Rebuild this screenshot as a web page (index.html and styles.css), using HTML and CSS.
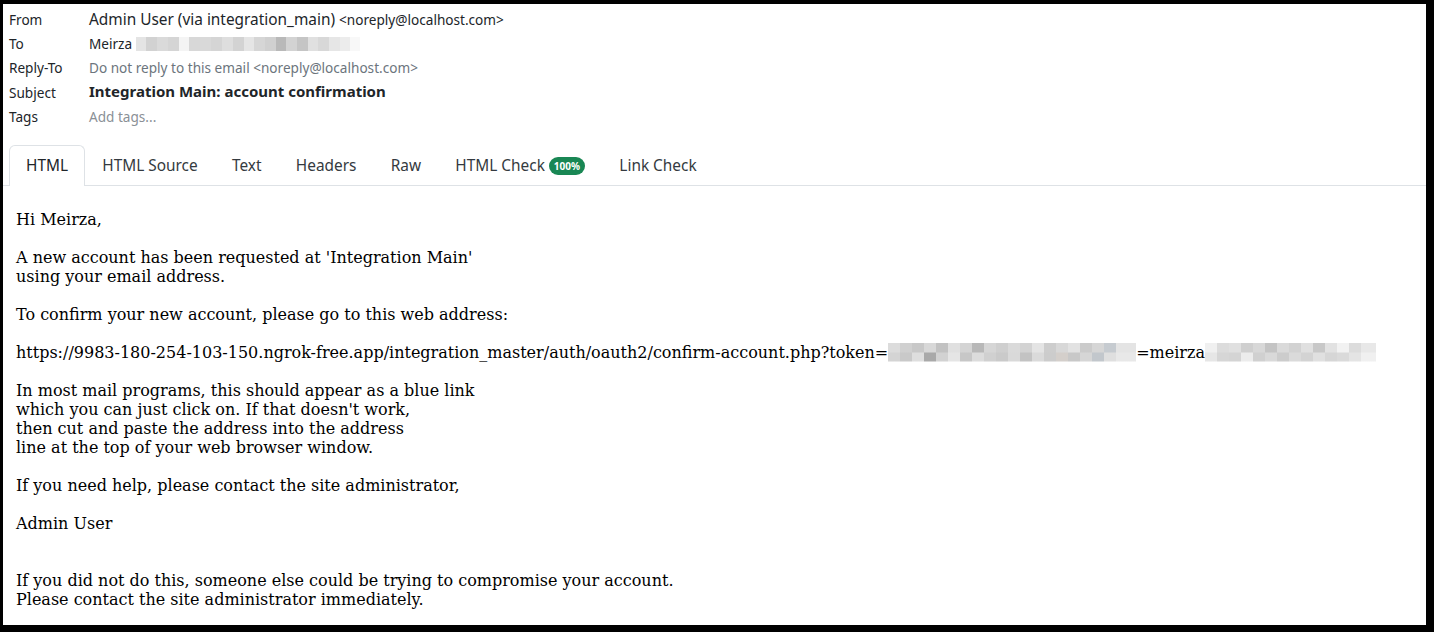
FILE: index.html
```html
<!DOCTYPE html>
<html>
<head>
<meta charset="utf-8">
<link rel="stylesheet" href="styles.css">
</head>
<body>
<div class="frame">
  <div class="headers">
    <div class="row"><div class="label">From</div><div class="value"><span class="name">Admin User (via integration_main)</span> <span class="addr">&lt;noreply@localhost.com&gt;</span></div></div>
    <div class="row"><div class="label">To</div><div class="value"><span class="to-name">Meirza</span><span class="blur blur-to"></span></div></div>
    <div class="row"><div class="label">Reply-To</div><div class="value muted">Do not reply to this email &lt;noreply@localhost.com&gt;</div></div>
    <div class="row"><div class="label">Subject</div><div class="value subject">Integration Main: account confirmation</div></div>
    <div class="row"><div class="label">Tags</div><div class="value tags">Add tags...</div></div>
  </div>
  <div class="tabs">
    <div class="tab active">HTML</div>
    <div class="tab">HTML Source</div>
    <div class="tab">Text</div>
    <div class="tab">Headers</div>
    <div class="tab">Raw</div>
    <div class="tab">HTML Check <span class="badge">100%</span></div>
    <div class="tab">Link Check</div>
  </div>
  <div class="message">
    <p>Hi Meirza,</p>
    <p>A new account has been requested at 'Integration Main'<br>using your email address.</p>
    <p>To confirm your new account, please go to this web address:</p>
    <p>https://9983-180-254-103-150.ngrok-free.app/integration_master/auth/oauth2/confirm-account.php?token=<span class="blur blur-token"></span>=meirza<span class="blur blur-user"></span></p>
    <p>In most mail programs, this should appear as a blue link<br>which you can just click on. If that doesn't work,<br>then cut and paste the address into the address<br>line at the top of your web browser window.</p>
    <p>If you need help, please contact the site administrator,</p>
    <p class="sign">Admin User</p>
    <p>If you did not do this, someone else could be trying to compromise your account.<br>Please contact the site administrator immediately.</p>
  </div>
</div>
</body>
</html>
```
FILE: styles.css
```css
html, body { margin: 0; padding: 0; background: #000; }
body { width: 1434px; height: 632px; overflow: hidden; }
.frame {
  margin: 4px 8px 0 3px;
  height: 621px;
  background: #fff;
  overflow: hidden;
  font-family: "Noto Sans", sans-serif;
  color: #212529;
}
.headers { padding: 3px 0 0 6px; }
.row { display: flex; align-items: center; height: 24.4px; }
.label { width: 80px; font-size: 13.6px; color: #212529; }
.value { font-size: 15.4px; display: flex; align-items: center; }
.addr { font-size: 13.6px; margin-left: 4px; }
.to-name { font-size: 13.6px; }
.muted { font-size: 13.6px; color: #6c757d; }
.subject { font-weight: 700; font-size: 15px; margin-top: -2px; }
.tags { font-size: 13.6px; color: #8a9096; }
.blur { display: inline-block; }
.blur-to {
  width: 224px; height: 14px; margin-left: 4px;
  background: linear-gradient(90deg, #e4e4e4 0 10px, #d2d2d2 10px 21px, #dadada 21px 32px, #d5d5d5 32px 43px, #f4f4f4 43px 53px, #d8d8d8 53px 64px, #d9d9d9 64px 75px, #d5d5d5 75px 86px, #dedede 86px 97px, #d3d3d3 97px 108px, #e5e5e5 108px 118px, #d6d6d6 118px 129px, #d0d0d0 129px 140px, #b9b9b9 140px 150px, #d3d3d3 150px 161px, #c5c5c5 161px 172px, #e0e0e0 172px 182px, #d8d8d8 182px 193px, #e6e6e6 193px 204px, #ececec 204px 214px, #f8f8f8 214px 224px);
}
.tabs {
  display: flex;
  margin-top: 16px;
  padding-left: 6px;
  border-bottom: 1px solid #dee2e6;
  height: 40px;
}
.tab {
  padding: 0 16px;
  margin-right: 0.3px;
  font-size: 15.4px;
  color: #343a40;
  display: flex; align-items: center;
  border: 1px solid transparent;
  border-bottom: none;
  border-radius: 6px 6px 0 0;
  margin-bottom: -1px;
  box-sizing: border-box;
  height: 41px;
}
.tab.active { border-color: #dee2e6; background: #fff; color: #212529; }
.badge {
  display: inline-block;
  margin-left: 4px;
  background: #198754;
  color: #fff;
  font-size: 10px;
  font-weight: 700;
  line-height: 18px;
  padding: 0 5px;
  border-radius: 9px;
}
.message {
  padding: 24px 13px 0;
  font-family: "DejaVu Serif", serif;
  font-size: 16px;
  line-height: 19px;
  color: #000;
}
.message p { margin: 0 0 19px; white-space: nowrap; }
.message p.sign { margin-bottom: 38px; }
.blur-token {
  width: 248px; height: 19px; vertical-align: -4px;
  background:
    linear-gradient(90deg, #dcdcdc 0 12px, #d0d0d0 12px 24px, #c8c8c8 24px 36px, #d8d8d8 36px 48px, #c2c2c2 48px 60px, #e0e0e0 60px 72px, #d4d4d4 72px 84px, #b8b8b8 84px 96px, #d6d6d6 96px 108px, #cfcfcf 108px 120px, #dadada 120px 132px, #d3d3d3 132px 144px, #e4e4e4 144px 156px, #cdcdcd 156px 168px, #d8d8d8 168px 180px, #e2e2e2 180px 192px, #cbcbcb 192px 204px, #d6d6d6 204px 216px, #c6cbd0 216px 228px, #e4e4e4 228px 248px) top / 100% 50% no-repeat,
    linear-gradient(90deg, #d4d4d4 0 12px, #c9c9c9 12px 24px, #dedede 24px 36px, #a9a9a9 36px 48px, #d2d2d2 48px 60px, #e5e5e5 60px 72px, #c7c7c7 72px 84px, #dcdcdc 84px 96px, #d0d0d0 96px 108px, #cacaca 108px 120px, #d9d9d9 120px 132px, #c3c3c3 132px 144px, #dadada 144px 156px, #cccccc 156px 168px, #d4cfcb 168px 180px, #c8c8c8 180px 192px, #d6d6d6 192px 204px, #c2c7cc 204px 216px, #dfdfdf 216px 228px, #e8e8e8 228px 248px) bottom / 100% 50% no-repeat;
}
.blur-user {
  width: 171px; height: 19px; vertical-align: -4px;
  background:
    linear-gradient(90deg, #f0f0f0 0 12px, #dcdcdc 12px 24px, #e0e0e0 24px 36px, #cfcfcf 36px 48px, #d8d8d8 48px 60px, #c4c4c4 60px 72px, #dadada 72px 84px, #d2d2d2 84px 96px, #e0e0e0 96px 108px, #c8c8c8 108px 120px, #e2e2e2 120px 132px, #f2f2f2 132px 144px, #dcdcdc 144px 156px, #e8e8e8 156px 171px) top / 100% 50% no-repeat,
    linear-gradient(90deg, #e6e6e6 0 12px, #d6d6d6 12px 24px, #d4d4d4 24px 36px, #ececec 36px 48px, #d0d0d0 48px 60px, #d9d9d9 60px 72px, #cccccc 72px 84px, #dadada 84px 96px, #d3d3d3 96px 108px, #e0e0e0 108px 120px, #d6d6d6 120px 132px, #dadada 132px 144px, #e4e4e4 144px 156px, #f0f0f0 156px 171px) bottom / 100% 50% no-repeat;
}
```
